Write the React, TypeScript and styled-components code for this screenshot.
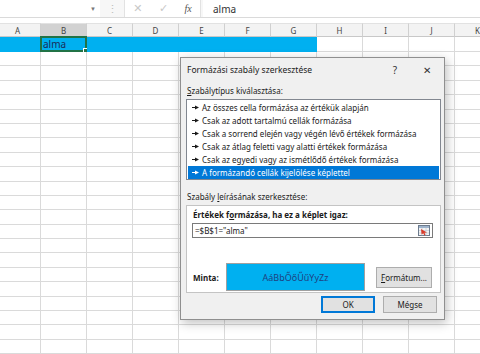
import React from 'react';
import styled, { createGlobalStyle } from 'styled-components';

const GlobalStyle = createGlobalStyle`
  html, body {
    margin: 0;
    padding: 0;
    background: #fff;
  }
  body {
    font-family: "Noto Sans", "Open Sans", sans-serif;
    color: #222;
  }
`;

const COLS = ['A', 'B', 'C', 'D', 'E', 'F', 'G', 'H', 'I', 'J', 'K'];
const ROW_COUNT = 22;

const Page = styled.div`
  position: relative;
  width: 480px;
  height: 354px;
  overflow: hidden;
  background: #fff;
`;

const FormulaBar = styled.div`
  display: flex;
  height: 17px;
  border-bottom: 1px solid #dadada;
  background: #f7f7f7;
`;

const NameBox = styled.div`
  width: 100px;
  display: flex;
  justify-content: flex-end;
  align-items: center;
  padding-right: 4px;
  box-sizing: border-box;
  background: #fff;
  color: #777;
  font-size: 6px;
`;

const Grip = styled.div`
  width: 24px;
  display: flex;
  justify-content: center;
  align-items: center;
  color: #bdbdbd;
  font-size: 11px;
`;

const FxButtons = styled.div`
  width: 77px;
  display: flex;
  align-items: center;
  justify-content: space-around;
  background: #fff;
  border-left: 1px solid #e2e2e2;
  border-right: 1px solid #e2e2e2;
  box-sizing: border-box;
`;

const FxGlyph = styled.span<{ $dim?: boolean; $italic?: boolean }>`
  font-size: ${p => (p.$italic ? '10px' : '11px')};
  font-family: ${p => (p.$italic ? '"Liberation Serif", serif' : '"DejaVu Sans", sans-serif')};
  font-style: ${p => (p.$italic ? 'italic' : 'normal')};
  color: ${p => (p.$dim ? '#c8c8c8' : '#555')};
`;

const FormulaInput = styled.div`
  flex: 1;
  margin-left: 2px;
  padding-left: 10px;
  display: flex;
  align-items: center;
  background: #fff;
  font-size: 10px;
  color: #333;
`;

const Spacer = styled.div`
  height: 5px;
  background: #fff;
`;

const Sheet = styled.div`
  display: grid;
  grid-template-columns: repeat(${COLS.length}, 46px);
  grid-template-rows: 14px 15px;
  grid-auto-rows: 14.4px;
  margin-left: -5px;
`;

const ColHeader = styled.div<{ $active?: boolean }>`
  display: flex;
  align-items: center;
  justify-content: center;
  font-size: 8px;
  color: #444;
  background: ${p => (p.$active ? '#d2d2d2' : '#f3f3f3')};
  border-right: 1px solid #d0d0d0;
  border-bottom: 1px solid #c8c8c8;
  border-top: 1px solid #e2e2e2;
  box-sizing: border-box;
`;

const Cell = styled.div<{ $fill?: boolean }>`
  position: relative;
  box-sizing: border-box;
  border-right: 1px solid #dadada;
  border-bottom: 1px solid #dadada;
  background: ${p => (p.$fill ? '#00b0f0' : '#fff')};
  ${p => (p.$fill ? 'border-color: #00b0f0;' : '')}
  font-size: 10px;
  line-height: 14px;
  color: #1a2b5a;
`;

const Selection = styled.div`
  position: absolute;
  inset: -1px -1px -1px -1px;
  border: 2px solid #217346;
  padding-left: 1px;
  line-height: 12px;
  &::after {
    content: '';
    position: absolute;
    right: -4px;
    bottom: -4px;
    width: 4px;
    height: 4px;
    background: #217346;
    border: 1px solid #fff;
  }
`;

const Dialog = styled.div`
  position: absolute;
  left: 180px;
  top: 57px;
  width: 265px;
  height: 263px;
  box-sizing: border-box;
  background: #f0f0f0;
  border: 1px solid #8f8f8f;
  box-shadow: 2px 3px 10px rgba(0, 0, 0, 0.25);
  font-size: 8px;
  color: #1a1a1a;
  display: flex;
  flex-direction: column;
`;

const TitleBar = styled.div`
  height: 23px;
  display: flex;
  align-items: center;
  padding-left: 6px;
  font-size: 8.5px;
`;

const Title = styled.span`
  flex: 1;
`;

const TitleButton = styled.span<{ $w: number }>`
  width: ${p => p.$w}px;
  text-align: center;
  font-size: 10px;
  color: #333;
`;

const Body = styled.div`
  flex: 1;
  display: flex;
  flex-direction: column;
  padding: 3px 3px 0 5px;
`;

const SectionLabel = styled.div<{ $gap?: number }>`
  height: 14px;
  line-height: 14px;
  margin-top: ${p => p.$gap ?? 0}px;
  margin-bottom: 1px;
  padding-left: 1px;
`;

const Key = styled.span`
  text-decoration: underline;
`;

const ListBox = styled.div`
  height: 81px;
  box-sizing: border-box;
  border: 1px solid #828790;
  background: #fff;
  padding: 1px;
`;

const ListItem = styled.div<{ $selected?: boolean }>`
  height: 13px;
  display: flex;
  align-items: center;
  gap: 3px;
  padding-left: 4px;
  background: ${p => (p.$selected ? '#0078d7' : 'transparent')};
  color: ${p => (p.$selected ? '#fff' : '#1a1a1a')};
  white-space: nowrap;
`;

const GroupBox = styled.div`
  height: 88px;
  box-sizing: border-box;
  border: 1px solid #c4c4c4;
  background: #fff;
  padding: 2px 7px 0 5px;
  display: flex;
  flex-direction: column;
`;

const BoldLabel = styled.div`
  height: 14px;
  line-height: 14px;
  font-weight: 700;
  padding-left: 1px;
`;

const FormulaField = styled.div`
  margin-top: 1px;
  height: 15px;
  box-sizing: border-box;
  border: 1px solid #7a7a7a;
  display: flex;
  align-items: center;
  padding: 0 2px 0 2px;
  font-size: 8px;
`;

const FieldText = styled.span`
  flex: 1;
`;

const PreviewRow = styled.div`
  margin-top: 25px;
  display: flex;
  align-items: center;
`;

const PreviewLabel = styled.span`
  width: 33px;
  padding-left: 1px;
  font-weight: 700;
`;

const Preview = styled.div`
  width: 139px;
  height: 28px;
  box-sizing: border-box;
  border: 1px solid #a0a0a0;
  background: #00b0f0;
  display: flex;
  align-items: center;
  justify-content: center;
  color: #1f3f80;
  font-size: 9px;
`;

const Button = styled.button<{ $default?: boolean; $w: number; $h: number }>`
  width: ${p => p.$w}px;
  height: ${p => p.$h}px;
  padding: 0;
  box-sizing: border-box;
  background: #e1e1e1;
  border: 1px solid ${p => (p.$default ? '#0078d7' : '#adadad')};
  ${p => (p.$default ? 'box-shadow: inset 0 0 0 1px #0078d7;' : '')}
  font-family: inherit;
  font-size: 8px;
  color: #1a1a1a;
`;

const FormatButton = styled(Button)`
  margin-left: 11px;
`;

const Footer = styled.div`
  display: flex;
  justify-content: flex-end;
  gap: 8px;
  padding: 3px 4px 0 0;
`;

const Arrow = () => (
  <svg width="7" height="5" viewBox="0 0 7 5">
    <rect x="0" y="2" width="4" height="1" fill="currentColor" />
    <path d="M3 0.5 L7 2.5 L3 4.5 Z" fill="currentColor" />
  </svg>
);

const RangeIcon = () => (
  <svg width="12" height="11" viewBox="0 0 12 11">
    <rect x="0.5" y="0.5" width="11" height="10" fill="#f4f4f4" stroke="#6d7b8d" />
    <rect x="1" y="1" width="10" height="2" fill="#9fb4cc" />
    <path d="M1 5.5 H11 M1 8 H11 M4 3 V10.5 M8 3 V10.5" stroke="#b9c3cf" strokeWidth="0.6" />
    <path d="M3 4 L9 7.5 L6.5 7.8 L7.5 10 L6.3 10.4 L5.3 8.3 L3.6 9.6 Z" fill="#d83b2a" />
  </svg>
);

const RULE_TYPES = [
  'Az összes cella formázása az értékük alapján',
  'Csak az adott tartalmú cellák formázása',
  'Csak a sorrend elején vagy végén lévő értékek formázása',
  'Csak az átlag feletti vagy alatti értékek formázása',
  'Csak az egyedi vagy az ismétlődő értékek formázása',
  'A formázandó cellák kijelölése képlettel',
];

const App = () => {
  const rows = Array.from({ length: ROW_COUNT }, (_, i) => i);

  return (
    <>
      <GlobalStyle />
      <Page>
        <FormulaBar>
          <NameBox>▼</NameBox>
          <Grip>⋮</Grip>
          <FxButtons>
            <FxGlyph $dim>✕</FxGlyph>
            <FxGlyph $dim>✓</FxGlyph>
            <FxGlyph $italic>fx</FxGlyph>
          </FxButtons>
          <FormulaInput>alma</FormulaInput>
        </FormulaBar>
        <Spacer />

        <Sheet>
          {COLS.map(c => (
            <ColHeader key={c} $active={c === 'B'}>{c}</ColHeader>
          ))}
          {rows.map(r =>
            COLS.map((c, ci) => {
              const filled = r === 0 && ci < 7;
              return (
                <Cell key={`${c}${r}`} $fill={filled}>
                  {r === 0 && c === 'B' && <Selection>alma</Selection>}
                </Cell>
              );
            })
          )}
        </Sheet>

        <Dialog>
          <TitleBar>
            <Title>Formázási szabály szerkesztése</Title>
            <TitleButton $w={30}>?</TitleButton>
            <TitleButton $w={34}>✕</TitleButton>
          </TitleBar>

          <Body>
            <SectionLabel>
              <Key>S</Key>zabálytípus kiválasztása:
            </SectionLabel>
            <ListBox>
              {RULE_TYPES.map((t, i) => (
                <ListItem key={t} $selected={i === RULE_TYPES.length - 1}>
                  <Arrow />
                  {t}
                </ListItem>
              ))}
            </ListBox>

            <SectionLabel $gap={10}>
              Szabály <Key>l</Key>eírásának szerkesztése:
            </SectionLabel>
            <GroupBox>
              <BoldLabel>
                Értékek f<Key>o</Key>rmázása, ha ez a képlet igaz:
              </BoldLabel>
              <FormulaField>
                <FieldText>=$B$1="alma"</FieldText>
                <RangeIcon />
              </FormulaField>
              <PreviewRow>
                <PreviewLabel>Minta:</PreviewLabel>
                <Preview>AáBbŐőŰűYyZz</Preview>
                <FormatButton $w={56} $h={21}>
                  <Key>F</Key>ormátum...
                </FormatButton>
              </PreviewRow>
            </GroupBox>

            <Footer>
              <Button $default $w={54} $h={17}>OK</Button>
              <Button $w={54} $h={17}>Mégse</Button>
            </Footer>
          </Body>
        </Dialog>
      </Page>
    </>
  );
};

export default App;
